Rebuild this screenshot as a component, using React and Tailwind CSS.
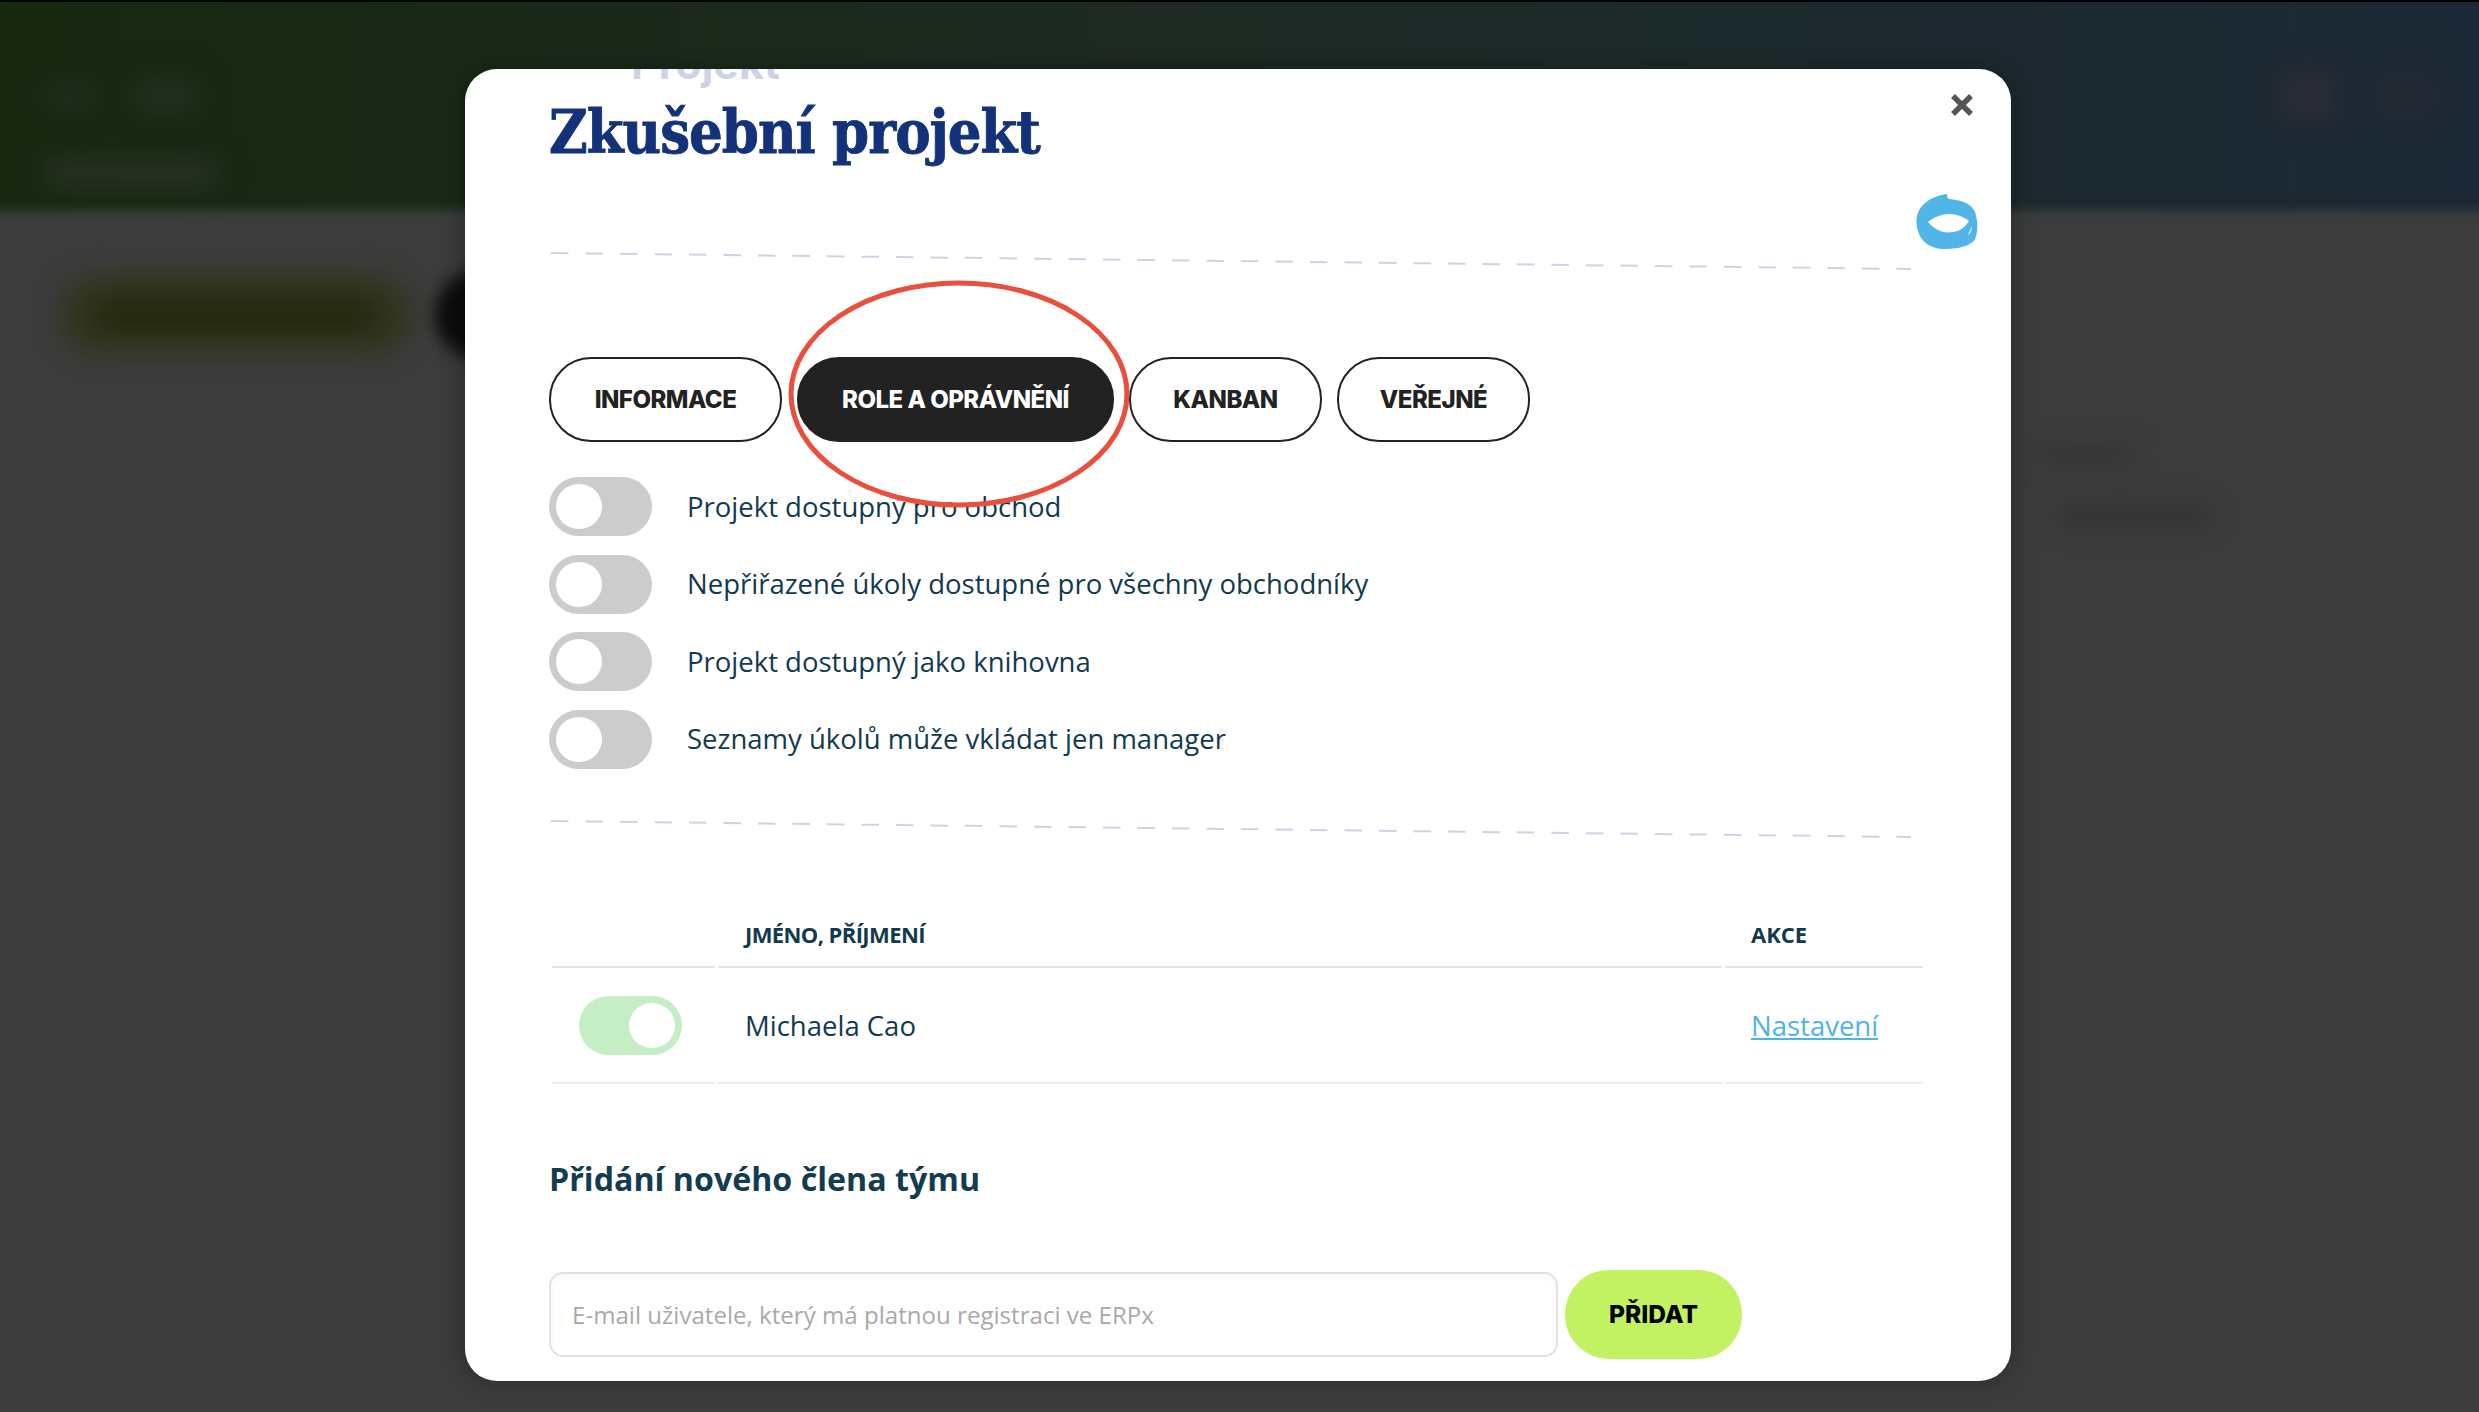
import React from 'react';

const SANS = "font-['Open_Sans',sans-serif]";

function Toggle({ on }) {
  return (
    <div className={`flex h-[59px] w-[103px] shrink-0 items-center rounded-full px-[7px] ${on ? 'justify-end bg-[#c5eec5]' : 'justify-start bg-[#cccccc]'}`}>
      <div className="h-[45px] w-[46px] rounded-full bg-white" />
    </div>
  );
}

function DashedLine({ drop }) {
  return (
    <svg width="1362" height={drop + 4} className="block">
      <line x1="2" y1="2" x2="1362" y2={drop + 2} stroke="#ced3e3" strokeWidth="2" strokeDasharray="17.5 17" />
    </svg>
  );
}

function Tab({ label, active, width }) {
  return (
    <button className={`h-[85px] rounded-[42px] border-2 border-[#222222] text-center font-['Inter',sans-serif] text-[24px] font-extrabold tracking-[-0.5px] ${width} ${active ? 'bg-[#222222] text-white' : 'bg-white text-[#222222]'}`}>
      {label}
    </button>
  );
}

const settings = [
  'Projekt dostupný pro obchod',
  'Nepřiřazené úkoly dostupné pro všechny obchodníky',
  'Projekt dostupný jako knihovna',
  'Seznamy úkolů může vkládat jen manager',
];

// blurred page behind the dialog
function Backdrop() {
  return (
    <div className="flex h-[1412px] w-full flex-col overflow-hidden bg-[#3c3c3c]">
      <div className="relative z-10 h-[2px] shrink-0 bg-black" />
      <div className="-mx-[12px] -mt-[14px] flex h-[222px] shrink-0 flex-col bg-gradient-to-r from-[#182810] via-[#1e2a24] to-[#1c2835] px-[57px] blur-[5px]">
        <div className="mt-[85px] flex items-center gap-[40px]">
          <div className="h-[24px] w-[50px] bg-[#222e20] blur-md" />
          <div className="h-[30px] w-[60px] bg-[#243022] blur-md" />
          <div className="ml-auto h-[46px] w-[56px] bg-[#2b2d38] blur-md" />
          <div className="h-[36px] w-[56px] bg-[#262a35] blur-md" />
        </div>
        <div className="mt-[42px] h-[24px] w-[170px] bg-[#2a3327] blur-md" />
      </div>
      <div className="mt-[60px] flex items-center gap-[22px] pl-[58px]">
        <div className="flex h-[84px] w-[355px] items-center justify-center rounded-full bg-[#313620] blur-md">
          <div className="h-[24px] w-[280px] bg-[#222208] blur-sm" />
        </div>
        <div className="h-[90px] w-[90px] rounded-full bg-[#0c0c0c] blur-sm" />
      </div>
      <div className="mt-[85px] ml-auto mr-[260px] flex w-[180px] flex-col gap-[42px]">
        <div className="h-[18px] w-[95px] bg-[#343434] blur-md" />
        <div className="ml-[20px] h-[22px] w-[150px] bg-[#323232] blur-md" />
      </div>
    </div>
  );
}

export default function App() {
  return (
    <div className={`relative h-[1412px] w-full overflow-hidden ${SANS}`}>
      <Backdrop />

      <div className="absolute left-[465px] top-[69px] h-[1312px] w-[1546px] overflow-hidden rounded-[32px] bg-white pl-[84px] shadow-[0_0_24px_rgba(0,0,0,0.3)]">
        <div className="-mt-[26px] ml-[82px] h-[40px] font-['Inter',sans-serif] text-[43px] leading-[40px] font-bold text-[#ced3e3]">Projekt</div>

        <h1 className="mt-[18px] h-[64px] font-['DejaVu_Serif',serif] text-[59px] leading-[64px] font-bold tracking-[-1px] text-[#14327a] [-webkit-text-stroke:0.8px_#14327a] [font-stretch:condensed]">
          Zkušební projekt
        </h1>

        <button className="absolute right-[38px] top-[25px] text-[#555555]">
          <svg width="22" height="22" viewBox="0 0 22 22" className="block">
            <path d="M2 2 L20 20 M20 2 L2 20" stroke="#555555" strokeWidth="5.5" />
          </svg>
        </button>

        <svg width="62" height="55" viewBox="0 0 62 55" className="absolute left-[1451px] top-[125px]">
          <path
            fillRule="evenodd"
            fill="#52b5e8"
            d="M31 0 C31 2 31 4 33 5 C45 6 55 9 59 18 C62 26 62.5 40 58 47 C50 54 38 55 26 55 C14 54 5 48 2 37 C-1 28 0 17 8 10 C14 4 23 1 31 0 Z M12 28 C18 23 26 20 33 20 C41 20 48 23 53 27 C50 32 45 37 37 38 C27 40 18 35 12 28 Z"
          />
          <path d="M56 32 C56 36 54 40 52 41 C53 38 55 35 56 32 Z" fill="#ffffff" />
        </svg>

        <div className="mt-[86px]">
          <DashedLine drop={16} />
        </div>

        <div className="mt-[86px] flex gap-[15px]">
          <Tab label="INFORMACE" width="w-[233px]" />
          <Tab label="ROLE A OPRÁVNĚNÍ" active width="w-[317px]" />
          <Tab label="KANBAN" width="w-[193px]" />
          <Tab label="VEŘEJNÉ" width="w-[193px]" />
        </div>

        <div className="mt-[35px] flex flex-col gap-[18.5px]">
          {settings.map((text) => (
            <div key={text} className="flex items-center gap-[35px]">
              <Toggle />
              <span className="text-[27.5px] text-[#123a4e]">{text}</span>
            </div>
          ))}
        </div>

        <div className="mt-[50px]">
          <DashedLine drop={16} />
        </div>

        <table className="mt-[65px] w-[1377px] table-fixed border-separate border-spacing-x-[3px] border-spacing-y-0 text-[#123a4e]">
          <thead>
            <tr className="text-left text-[22px] font-bold">
              <th className="h-[64px] w-[163px] border-b-2 border-[#e5e5e5]" />
              <th className="h-[64px] border-b-2 border-[#e5e5e5] pl-[27px] tracking-[-0.6px]">JMÉNO, PŘÍJMENÍ</th>
              <th className="h-[64px] w-[198px] border-b-2 border-[#e5e5e5] pl-[26px]">AKCE</th>
            </tr>
          </thead>
          <tbody>
            <tr className="text-[27.5px]">
              <td className="h-[116px] border-b-2 border-[#eeeeee] pl-[27px] pt-[2px]">
                <Toggle on />
              </td>
              <td className="border-b-2 border-[#eeeeee] pl-[27px] pt-[2px]">Michaela Cao</td>
              <td className="border-b-2 border-[#eeeeee] pl-[26px] pt-[2px]">
                <a className="text-[#4fb3e6] underline">Nastavení</a>
              </td>
            </tr>
          </tbody>
        </table>

        <h2 className="mt-[72px] text-[32.2px] leading-[46px] font-bold text-[#143c50]">Přidání nového člena týmu</h2>

        <div className="mt-[68px] flex items-center gap-[7px]">
          <input
            placeholder="E-mail uživatele, který má platnou registraci ve ERPx"
            className="h-[85px] w-[1009px] rounded-[14px] border-2 border-[#e2e2e2] bg-white px-[21px] text-[24.1px] shadow-[inset_0_2px_6px_rgba(0,0,0,0.04)] outline-none placeholder:text-[#a9a9a9]"
          />
          <button className="h-[89px] w-[177px] rounded-[44px] bg-[#c2f261] font-['Inter',sans-serif] text-[24.5px] font-extrabold text-black">
            PŘIDAT
          </button>
        </div>
      </div>

      {/* red hand-drawn highlight around the active tab */}
      <svg width="348" height="234" className="absolute left-[785px] top-[277px]">
        <ellipse cx="174" cy="117" rx="168" ry="111" fill="none" stroke="#e94f3d" strokeWidth="5" />
      </svg>
    </div>
  );
}
